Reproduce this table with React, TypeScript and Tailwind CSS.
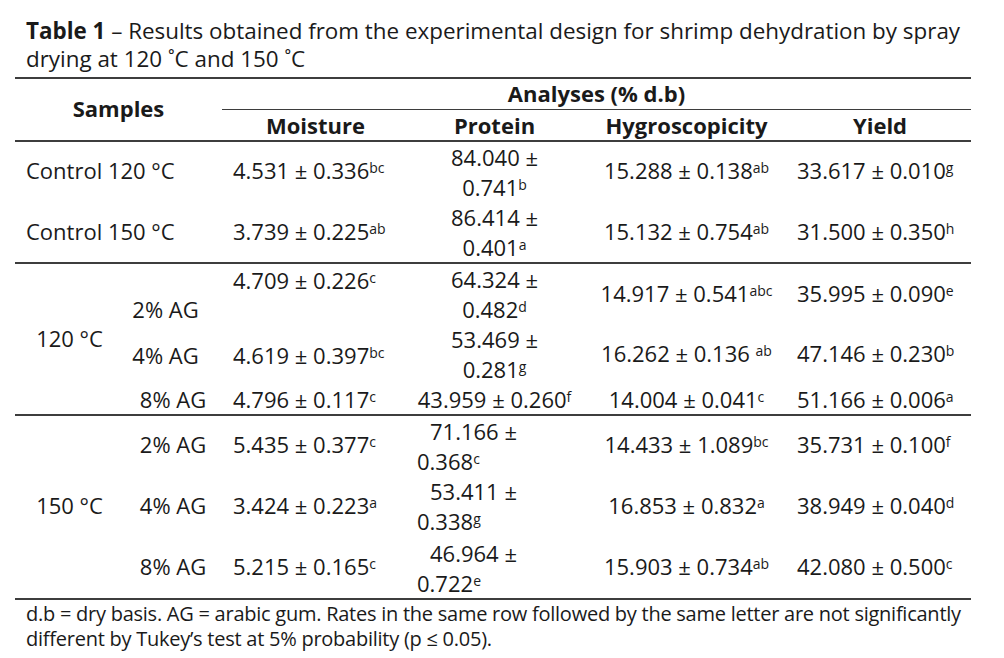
import React from "react";

const S = ({ children }: { children: React.ReactNode }) => (
  <sup className="text-[14px] top-[-0.45em]">{children}</sup>
);

const rowBorder = "border-b-2 border-[#3d3d3d]";

export default function App() {
  return (
    <div className="w-[1004px] h-[658px] bg-white text-[#1a1a1a] font-['Open_Sans',sans-serif] overflow-hidden">
      <div className="pl-[26px] pt-[17px] text-[22.4px] leading-[28px] whitespace-nowrap">
        <span className="font-bold">Table 1</span> – Results obtained from the experimental design for shrimp dehydration by spray
        <br />
        drying at 120 ˚C and 150 ˚C
      </div>
      <table className="ml-[15px] mt-[4px] w-[956px] table-fixed border-collapse text-[22px] leading-[30px]">
        <colgroup>
          <col className="w-[109px]" />
          <col className="w-[98px]" />
          <col className="w-[183px]" />
          <col className="w-[179px]" />
          <col className="w-[205px]" />
          <col className="w-[182px]" />
        </colgroup>
        <thead className="font-bold">
          <tr className="border-t-2 border-[#3d3d3d] h-[31px]">
            <th colSpan={2} rowSpan={2} className={`${rowBorder} text-center align-middle font-bold pb-[3px]`}>
              Samples
            </th>
            <th colSpan={4} className="border-b-[1.5px] border-[#3d3d3d] text-center font-bold p-0 leading-[29px]">
              Analyses (% d.b)
            </th>
          </tr>
          <tr className={`${rowBorder} h-[32px]`}>
            <th className="text-center font-bold pl-[4px]">Moisture</th>
            <th className="text-center font-bold">Protein</th>
            <th className="text-center font-bold">Hygroscopicity</th>
            <th className="text-center font-bold">Yield</th>
          </tr>
        </thead>
        <tbody>
          <tr className="h-[61px]">
            <td colSpan={2} className="pl-[11px] align-middle pb-[4px]">Control 120 °C</td>
            <td className="pl-[11px] align-middle pb-[4px]">4.531 ± 0.336<S>bc</S></td>
            <td className="text-center align-middle">84.040 ±<br />0.741<S>b</S></td>
            <td className="text-center align-middle pb-[4px]">15.288 ± 0.138<S>ab</S></td>
            <td className="pl-[8px] align-middle pb-[4px]">33.617 ± 0.010<S>g</S></td>
          </tr>
          <tr className={`${rowBorder} h-[61px]`}>
            <td colSpan={2} className="pl-[11px] align-middle pb-[2px]">Control 150 °C</td>
            <td className="pl-[11px] align-middle pb-[2px]">3.739 ± 0.225<S>ab</S></td>
            <td className="text-center align-middle">86.414 ±<br />0.401<S>a</S></td>
            <td className="text-center align-middle pb-[2px]">15.132 ± 0.754<S>ab</S></td>
            <td className="pl-[8px] align-middle pb-[2px]">31.500 ± 0.350<S>h</S></td>
          </tr>

          <tr className="h-[60px]">
            <td rowSpan={3} className={`${rowBorder} text-center align-middle pb-[2px]`}>120 °C</td>
            <td className="text-center align-top pt-[30px] pr-[15px]">2% AG</td>
            <td className="pl-[11px] align-top pt-[1px]">4.709 ± 0.226<S>c</S></td>
            <td className="text-center align-top">64.324 ±<br />0.482<S>d</S></td>
            <td className="text-center align-top pt-[14px]">14.917 ± 0.541<S>abc</S></td>
            <td className="pl-[8px] align-top pt-[14px]">35.995 ± 0.090<S>e</S></td>
          </tr>
          <tr className="h-[60px]">
            <td className="text-center align-top pt-[16px] pr-[15px]">4% AG</td>
            <td className="pl-[11px] align-top pt-[16px]">4.619 ± 0.397<S>bc</S></td>
            <td className="text-center align-top">53.469 ±<br />0.281<S>g</S></td>
            <td className="text-center align-top pt-[14px]">16.262 ± 0.136 <S>ab</S></td>
            <td className="pl-[8px] align-top pt-[14px]">47.146 ± 0.230<S>b</S></td>
          </tr>
          <tr className={`${rowBorder} h-[31px]`}>
            <td className="text-center align-middle">8% AG</td>
            <td className="pl-[11px] align-middle">4.796 ± 0.117<S>c</S></td>
            <td className="text-center align-middle">43.959 ± 0.260<S>f</S></td>
            <td className="text-center align-middle">14.004 ± 0.041<S>c</S></td>
            <td className="pl-[8px] align-middle">51.166 ± 0.006<S>a</S></td>
          </tr>

          <tr className="h-[61px]">
            <td rowSpan={3} className={`${rowBorder} text-center align-middle pb-[4px]`}>150 °C</td>
            <td className="text-center align-middle pb-[4px]">2% AG</td>
            <td className="pl-[11px] align-middle pb-[4px]">5.435 ± 0.377<S>c</S></td>
            <td className="pl-[12px] align-top pt-[0px] indent-[13px]">71.166 ±<br />0.368<S>c</S></td>
            <td className="text-center align-middle pb-[4px]">14.433 ± 1.089<S>bc</S></td>
            <td className="pl-[8px] align-middle pb-[4px]">35.731 ± 0.100<S>f</S></td>
          </tr>
          <tr className="h-[62px]">
            <td className="text-center align-middle pb-[4px]">4% AG</td>
            <td className="pl-[11px] align-middle pb-[4px]">3.424 ± 0.223<S>a</S></td>
            <td className="pl-[12px] align-top pt-[0px] indent-[13px]">53.411 ±<br />0.338<S>g</S></td>
            <td className="text-center align-middle pb-[4px]">16.853 ± 0.832<S>a</S></td>
            <td className="pl-[8px] align-middle pb-[4px]">38.949 ± 0.040<S>d</S></td>
          </tr>
          <tr className={`${rowBorder} h-[61px]`}>
            <td className="text-center align-middle pb-[4px]">8% AG</td>
            <td className="pl-[11px] align-middle pb-[4px]">5.215 ± 0.165<S>c</S></td>
            <td className="pl-[12px] align-top pt-[0px] indent-[13px]">46.964 ±<br />0.722<S>e</S></td>
            <td className="text-center align-middle pb-[4px]">15.903 ± 0.734<S>ab</S></td>
            <td className="pl-[8px] align-middle pb-[4px]">42.080 ± 0.500<S>c</S></td>
          </tr>
        </tbody>
      </table>
      <div className="pl-[26px] pt-[1px] text-[20px] leading-[25px] tracking-[-0.25px] whitespace-nowrap">
        d.b = dry basis. AG = arabic gum. Rates in the same row followed by the same letter are not significantly
        <br />
        different by Tukey’s test at 5% probability (p ≤ 0.05).
      </div>
    </div>
  );
}
